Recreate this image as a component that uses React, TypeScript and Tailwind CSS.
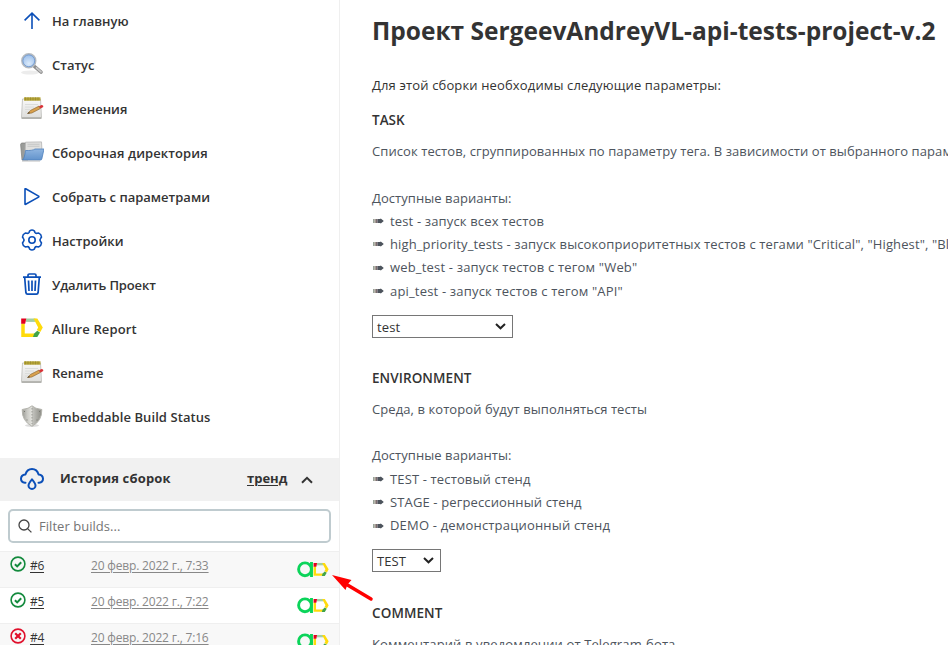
import React from "react";

const ArrowUp = () => (
  <svg width="24" height="24" viewBox="0 0 24 24" fill="none" stroke="#0b4fb8" strokeWidth="1.6">
    <path d="M12 20V4.500M4.600 11.400 12 4.100l7.400 7.300" />
  </svg>
);

const Magnifier = () => (
  <svg width="24" height="24" viewBox="0 0 24 24">
    <defs>
      <radialGradient id="lens" cx="0.5" cy="0.7" r="0.7">
        <stop offset="0" stopColor="#dcebfb" />
        <stop offset="1" stopColor="#93b9e8" />
      </radialGradient>
    </defs>
    <ellipse cx="10" cy="19.500" rx="9" ry="2" fill="#ececec" />
    <path d="m14.500 13.500 6.500 5.500" stroke="#8d8d8d" strokeWidth="3.600" strokeLinecap="round" />
    <path d="m16.500 14.800 4.500 4" stroke="#c8c8c8" strokeWidth="1.800" strokeLinecap="round" />
    <circle cx="8.800" cy="7.800" r="6.900" fill="url(#lens)" stroke="#b5babf" strokeWidth="1.600" />
    <circle cx="8.800" cy="7.800" r="5.900" fill="none" stroke="#6f98d0" strokeWidth="0.900" />
  </svg>
);

const Notepad = () => (
  <svg width="24" height="24" viewBox="0 0 24 24">
    <defs>
      <linearGradient id="paper" x1="0" y1="0" x2="0" y2="1">
        <stop offset="0" stopColor="#f8f8f8" />
        <stop offset="1" stopColor="#dededc" />
      </linearGradient>
    </defs>
    <path d="M2.500 2h18l1 18.500H1.500z" fill="url(#paper)" stroke="#c2c2be" strokeWidth="0.900" />
    <path d="M1.500 21.200h20" stroke="#92928c" />
    <path d="M4 .3h16.500v3.400H4z" fill="#b5a436" />
    <path d="M5.500.3v3M8 .3v3M10.500.3v3M13 .3v3M15.500.3v3M18 .3v3" stroke="#8d812d" strokeWidth="0.600" />
    <path d="M5 7.500h13M5 10h9M5 12.500h5M5 15h3" stroke="#d8dad8" strokeWidth="0.900" />
    <path d="m7.500 16.500 3-3.100 8.500-4.300 1.300 2.500-8.500 4.400z" fill="#d9a04c" stroke="#8f6830" strokeWidth="0.700" />
    <path d="m7.500 16.500 1.600-1.500.7 1.200z" fill="#333" />
    <path d="m19 9.200 2.500-1.300q2.200.2 1.800 2l-2.700 1.600z" fill="#d93136" />
  </svg>
);

const Folder = () => (
  <svg width="24" height="24" viewBox="0 0 24 24">
    <defs>
      <linearGradient id="folder" x1="0" y1="0" x2="0" y2="1">
        <stop offset="0" stopColor="#8fb5e0" />
        <stop offset="1" stopColor="#6293cc" />
      </linearGradient>
    </defs>
    <path d="M.6 3.500 1.500 2h4L6.500 3.500 8 19H2z" fill="#9a9c99" stroke="#7e807d" strokeWidth="0.700" />
    <path d="m5.500 1.200 16-.3.500 9L5 13.500z" fill="#e0e0de" stroke="#b4b4b4" strokeWidth="0.800" />
    <path d="M7.500 3.300h12M7.500 5.300h12" stroke="#c4c5c3" strokeWidth="0.900" />
    <path d="M5.500 9.500q7 .3 9.500-1.500H24L21.800 18q-.2 1-1.300 1H2.500Q4.500 17.500 5.500 9.500z" fill="url(#folder)" stroke="#4e80bc" strokeWidth="0.800" />
    <path d="M2 20h18" stroke="#b5b5b5" strokeWidth="0.900" />
  </svg>
);

const Play = () => (
  <svg width="24" height="24" viewBox="0 0 24 24" fill="none" stroke="#0b4fb8" strokeWidth="1.600" strokeLinejoin="round">
    <path d="M5 4.300v14.600q0 .7.700.4L18.600 12.100q.6-.5 0-1L5.700 3.800Q5 3.500 5 4.300z" />
  </svg>
);

const Gear = () => (
  <svg width="24" height="24" viewBox="0 0 24 24" fill="none" stroke="#0b4fb8" strokeWidth="1.600" strokeLinejoin="round">
    <path d="M9.700 1.800Q12 .3 14.300 1.800l.6 1.600q.6 1.200 2.100.9l1.800-.2q2.500 1.200 2.700 3.900l-1 1.600q-1 1.400 0 2.800l1 1.600q-.2 2.700-2.700 3.900l-1.800-.2q-1.500-.3-2.100.9l-.6 1.600q-2.300 1.500-4.600 0l-.6-1.600q-.6-1.200-2.100-.9l-1.800.2q-2.500-1.200-2.700-3.900l1-1.600q1-1.400 0-2.800l-1-1.600Q2.700 5.300 5.200 4.100l1.800.2q1.500.3 2.100-.9z" />
    <circle cx="12" cy="11" r="3.200" />
  </svg>
);

const Trash = () => (
  <svg width="24" height="24" viewBox="0 0 24 24" fill="none" stroke="#0b4fb8" strokeWidth="1.700" strokeLinejoin="round">
    <path d="M3 4.200h18M4.700 4.500l1.200 15.200q.2 1.500 1.700 1.500h8.800q1.500 0 1.700-1.500L19.300 4.500M8 4V2.200Q8 1 9.300 1h5.400Q16 1 16 2.200V4M12 7.500V18M8.500 7.500 9 18M15.500 7.500 15 18" />
  </svg>
);

const AllureMark = () => (
  <>
    <path d="M3 6.500v11.700h11.500" fill="none" stroke="#ffdb0b" strokeWidth="3.500" />
    <path d="M6 3.200h9.500" fill="none" stroke="#a3cfa3" strokeWidth="3.400" />
    <path d="M13.500 1.500h3.800L22.800 10.600 20.300 15l-3.500-2 1.400-2.400z" fill="#ffdb0b" />
    <path d="m20 15.400-2.700 4.700-4.300-.1 1.200-3.400 3-2.900z" fill="#41a447" />
    <path d="M1.200 1.500h5l-1 5.300h-4z" fill="#e3001f" />
  </>
);

const Allure = () => (
  <svg width="24" height="24" viewBox="0 0 24 24">
    <AllureMark />
  </svg>
);

const Shield = () => (
  <svg width="24" height="24" viewBox="0 0 24 24">
    <defs>
      <linearGradient id="shield" x1="0" x2="1">
        <stop offset="0" stopColor="#989892" />
        <stop offset="0.25" stopColor="#c9c9c4" />
        <stop offset="0.49" stopColor="#e3e3de" />
        <stop offset="0.52" stopColor="#c4c4bf" />
        <stop offset="1" stopColor="#8c8c85" />
      </linearGradient>
    </defs>
    <ellipse cx="12" cy="20.500" rx="7" ry="1.500" fill="#ddd" />
    <path d="M12 .8Q9 3.800 2.200 4.500 1.800 16 12 21.300 22.200 16 21.800 4.500 15 3.800 12 .8z" fill="url(#shield)" stroke="#b4b4ad" />
    <path d="M12 3v16" stroke="#9a9a94" strokeWidth="1" strokeDasharray="1.500 1.500" />
    <path d="M4 6.500h1M19 6.500h1M6.500 15h1M16.500 15h1" stroke="#77776f" />
  </svg>
);

const CloudDrop = () => (
  <svg className="-mt-[2px]" width="26" height="24" viewBox="0 0 26 24" fill="none" stroke="#0b4fb8" strokeWidth="2" strokeLinecap="round" strokeLinejoin="round">
    <path d="M6.500 15.700H6Q2 15.100 2 11.700q.2-3.600 4.400-4.100Q8 2 13 2t6.600 5.600q4.200.5 4.400 4.100 0 3.400-4 4h-.5" />
    <path d="M13 12.300q-3.500 4.200-3.500 6.100a3.500 3.500 0 0 0 7 0q0-1.900-3.500-6.100z" />
  </svg>
);

const menu = [
  { label: "На главную", icon: <ArrowUp />, cls: "tracking-[0.03px]" },
  { label: "Статус", icon: <Magnifier />, cls: "" },
  { label: "Изменения", icon: <Notepad />, cls: "" },
  { label: "Сборочная директория", icon: <Folder />, cls: "tracking-[0.09px]" },
  { label: "Собрать с параметрами", icon: <Play />, cls: "" },
  { label: "Настройки", icon: <Gear />, cls: "" },
  { label: "Удалить Проект", icon: <Trash />, cls: "tracking-[-0.14px]" },
  { label: "Allure Report", icon: <Allure />, cls: "tracking-[0.12px]" },
  { label: "Rename", icon: <Notepad />, cls: "" },
  { label: "Embeddable Build Status", icon: <Shield />, cls: "tracking-[0.08px]" },
];

const builds = [
  { id: "#6", date: "20 февр. 2022 г., 7:33", ok: true },
  { id: "#5", date: "20 февр. 2022 г., 7:22", ok: true },
  { id: "#4", date: "20 февр. 2022 г., 7:16", ok: false },
];

const BuildStatus = ({ ok }: { ok: boolean }) => (
  <svg width="16" height="16" viewBox="0 0 16 16" fill="none" stroke={ok ? "#138a3d" : "#e0102c"}>
    <circle cx="8" cy="8" r="6.900" strokeWidth="1.600" />
    {ok ? (
      <path d="m4.900 8.200 2.300 2.200 4-4.200" strokeWidth="2" />
    ) : (
      <path d="m5.200 5.200 5.600 5.600M10.800 5.200l-5.600 5.600" strokeWidth="2.200" />
    )}
  </svg>
);

const AllureBadge = () => (
  <svg width="32" height="17" viewBox="0 0 32 17">
    <circle cx="8" cy="8.300" r="6.400" fill="none" stroke="#0bd45a" strokeWidth="2.900" />
    <path d="M14.500 1v15" stroke="#0bd45a" strokeWidth="2.900" />
    <g transform="translate(15.700 .9) scale(.7)">
      <AllureMark />
    </g>
  </svg>
);

const Bullet = () => (
  <svg className="mr-[6px] shrink-0" width="12" height="7" viewBox="0 0 12 7">
    <path d="M1 1h1.500v4H1z" fill="#9aa59a" />
    <path d="M2.500 1H4v4H2.500z" fill="#a39b92" />
    <path d="M4 1h1.500v4H4z" fill="#7b6a70" />
    <path d="M5.500 1h3V.3L11.800 3 8.500 5.700V5h-3z" fill="#4d545d" />
  </svg>
);

const Option = ({ children, cls }: { children: React.ReactNode; cls: string }) => (
  <div className="flex h-[23.3px] items-center">
    <Bullet />
    <span className={cls}>{children}</span>
  </div>
);

const SelectBox = ({ value, cls }: { value: string; cls: string }) => (
  <div className={`flex h-[23px] items-center justify-between border border-[#767676] pr-[6px] pl-[4px] text-[#333] ${cls}`}>
    <span className="pt-[2px] tracking-[0.1px]">{value}</span>
    <svg width="11" height="7" viewBox="0 0 11 7" fill="none" stroke="#222" strokeWidth="2">
      <path d="m1 1 4.500 4.300L10 1" />
    </svg>
  </div>
);

export default function App() {
  return (
    <div className="relative flex h-[645px] w-[948px] overflow-hidden bg-white font-['Open_Sans','Noto_Sans',sans-serif] text-[13px] whitespace-nowrap text-[#333]">
      <aside className="w-[340px] shrink-0 border-r border-[#efefef]">
        <nav className="-mt-px h-[459px]">
          {menu.map((m) => (
            <div key={m.label} className="flex h-11 items-center gap-2 pl-5">
              <span className="-mt-px">{m.icon}</span>
              <span className={`mt-[2px] font-semibold ${m.cls}`}>{m.label}</span>
            </div>
          ))}
        </nav>
        <div className="flex h-[43px] items-center bg-[#f1f1f1] pl-[19px] font-bold">
          <CloudDrop />
          <span className="-mt-[2px] ml-[15px] w-[187px] tracking-[0.16px]">История сборок</span>
          <span className="-mt-[2px] w-[40px] underline underline-offset-2">тренд</span>
          <svg className="ml-[14px]" width="12" height="8" viewBox="0 0 12 8" fill="none" stroke="#333" strokeWidth="2">
            <path d="m1 6.800 5-5 5 5" />
          </svg>
        </div>
        <div className="mt-[8px] ml-2 flex h-[34px] w-[323px] items-center rounded-[5px] border-2 border-[#bfcbcf] pl-2 text-[#757575]">
          <svg width="14" height="14" viewBox="0 0 14 14" fill="none" stroke="#444" strokeWidth="1.300">
            <circle cx="6" cy="6" r="5" />
            <path d="m9.600 9.600 3.800 3.800" />
          </svg>
          <span className="ml-[7px] pt-[2px] tracking-[0.04px]">Filter builds...</span>
        </div>
        <div className="mt-[8px]">
          {builds.map((b) => (
            <div key={b.id} className="flex h-9 border-t border-[#efefef] pl-[10px] text-xs odd:bg-[#f8f8f8]">
              <span className="mt-[4px]">
                <BuildStatus ok={b.ok} />
              </span>
              <span className="mt-[6px] ml-1 w-[61px] tracking-[-0.3px] underline underline-offset-2">{b.id}</span>
              <span className="mt-[6px] w-[206px] tracking-[-0.18px] text-[#888] underline underline-offset-2">{b.date}</span>
              <span className="mt-[9px]">
                <AllureBadge />
              </span>
            </div>
          ))}
        </div>
      </aside>
      <main className="pl-8 text-[#4d545d]">
        <h1 className="mt-[13px] h-[36px] text-[24.5px] leading-[36px] font-bold text-[#333]">
          <span>Проект SergeevAndreyVL-api-tests-project-v.2</span>
        </h1>
        <p className="mt-[25px] h-[23px] leading-[23px] text-[#333]">
          <span className="tracking-[0.14px]">Для этой сборки необходимы следующие параметры:</span>
        </p>
        <h2 className="mt-[12px] h-[23px] text-[13.5px] leading-[23px] font-semibold text-[#333]">
          <span>TASK</span>
        </h2>
        <section className="mt-[8px] h-[175px] leading-[23.3px]">
          <p>
            <span className="tracking-[0.08px]">
              Список тестов, сгруппированных по параметру тега. В зависимости от выбранного параметра
            </span>
          </p>
          <p className="mt-[23.3px]">
            <span className="tracking-[0.06px]">Доступные варианты:</span>
          </p>
          <Option cls="tracking-[0.15px]">test - запуск всех тестов</Option>
          <Option cls="tracking-[0.12px]">
            high_priority_tests - запуск высокоприоритетных тестов с тегами "Critical", "Highest", "Blocker"
          </Option>
          <Option cls="tracking-[0.18px]">web_test - запуск тестов с тегом "Web"</Option>
          <Option cls="tracking-[0.18px]">api_test - запуск тестов с тегом "API"</Option>
        </section>
        <SelectBox value="test" cls="w-[141px]" />
        <h2 className="mt-[29px] h-[23px] text-[13.5px] leading-[23px] font-semibold text-[#333]">
          <span className="tracking-[0.08px]">ENVIRONMENT</span>
        </h2>
        <section className="mt-[8px] h-[151px] leading-[23.3px]">
          <p>
            <span className="tracking-[0.08px]">Среда, в которой будут выполняться тесты</span>
          </p>
          <p className="mt-[22.800px] mb-[0.500px]">
            <span className="tracking-[0.06px]">Доступные варианты:</span>
          </p>
          <Option cls="tracking-[0.14px]">TEST - тестовый стенд</Option>
          <Option cls="tracking-[0.13px]">STAGE - регрессионный стенд</Option>
          <Option cls="tracking-[0.18px]">DEMO - демонстрационный стенд</Option>
        </section>
        <SelectBox value="TEST" cls="w-[69px]" />
        <h2 className="mt-[30px] h-[23px] text-[13.5px] leading-[23px] font-semibold text-[#333]">
          <span className="tracking-[0.1px]">COMMENT</span>
        </h2>
        <p className="mt-[8px] leading-[23px]">
          <span className="tracking-[0.12px]">Комментарий в уведомлении от Telegram-бота</span>
        </p>
      </main>
      <svg className="absolute top-[572px] left-[331px]" width="44" height="30" viewBox="0 0 44 30">
        <path d="m14 11.500 26 15.500" stroke="#f00" strokeWidth="3.500" strokeLinecap="round" />
        <path d="M1 3 20.500 8l-4 4.500-2 5.500z" fill="#f00" />
      </svg>
    </div>
  );
}
